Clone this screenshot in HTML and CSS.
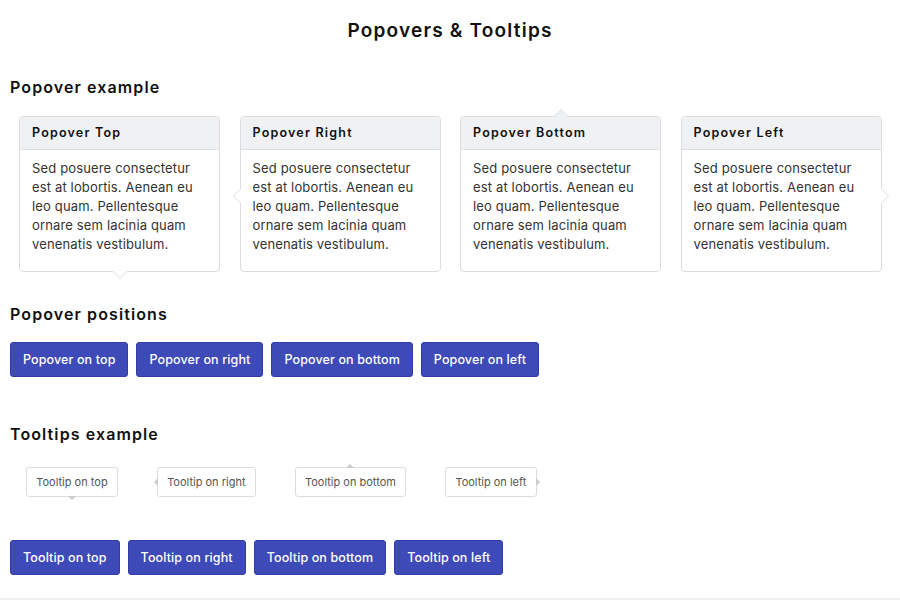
FILE: index.html
```html
<!DOCTYPE html>
<html>
<head>
<meta charset="utf-8">
<link rel="stylesheet" href="styles.css">
</head>
<body>
<div class="page">
  <h1 class="title">Popovers &amp; Tooltips</h1>

  <h2 class="heading h-first">Popover example</h2>
  <div class="cards">
    <div class="card arrow-bottom">
      <div class="card-head">Popover Top</div>
      <div class="card-body">Sed posuere consectetur est at lobortis. Aenean eu leo quam. Pellentesque ornare sem lacinia quam venenatis vestibulum.</div>
    </div>
    <div class="card arrow-left">
      <div class="card-head">Popover Right</div>
      <div class="card-body">Sed posuere consectetur est at lobortis. Aenean eu leo quam. Pellentesque ornare sem lacinia quam venenatis vestibulum.</div>
    </div>
    <div class="card arrow-top">
      <div class="card-head">Popover Bottom</div>
      <div class="card-body">Sed posuere consectetur est at lobortis. Aenean eu leo quam. Pellentesque ornare sem lacinia quam venenatis vestibulum.</div>
    </div>
    <div class="card arrow-right">
      <div class="card-head">Popover Left</div>
      <div class="card-body">Sed posuere consectetur est at lobortis. Aenean eu leo quam. Pellentesque ornare sem lacinia quam venenatis vestibulum.</div>
    </div>
  </div>

  <h2 class="heading h-second">Popover positions</h2>
  <div class="btns">
    <button class="btn">Popover on top</button>
    <button class="btn">Popover on right</button>
    <button class="btn">Popover on bottom</button>
    <button class="btn">Popover on left</button>
  </div>

  <h2 class="heading h-third">Tooltips example</h2>
  <div class="tips">
    <div class="tip tip-top">Tooltip on top</div>
    <div class="tip tip-right">Tooltip on right</div>
    <div class="tip tip-bottom">Tooltip on bottom</div>
    <div class="tip tip-left">Tooltip on left</div>
  </div>

  <div class="btns btns-tips">
    <button class="btn">Tooltip on top</button>
    <button class="btn">Tooltip on right</button>
    <button class="btn">Tooltip on bottom</button>
    <button class="btn">Tooltip on left</button>
  </div>
</div>
<div class="footer-line"></div>
</body>
</html>
```

FILE: styles.css
```css
* { box-sizing: border-box; }
html, body { margin: 0; padding: 0; }
body {
  background: #fff;
  font-family: "Inter", "Noto Sans", "Liberation Sans", sans-serif;
  color: #222;
  width: 900px;
  height: 600px;
  overflow: hidden;
  position: relative;
}
.page {
  padding: 19px 10px 0 10px;
  height: 598px;
}
.title {
  margin: 0;
  text-align: center;
  font-size: 19px;
  line-height: 24px;
  font-weight: 600;
  letter-spacing: 1.2px;
  color: #111;
}
.heading {
  margin: 0;
  font-size: 16px;
  line-height: 22px;
  font-weight: 600;
  letter-spacing: 1.1px;
  color: #111;
}
.h-first { margin-top: 33px; }
.h-second { margin-top: 31px; }
.h-third { margin-top: 46px; }

.cards {
  display: flex;
  gap: 19.5px;
  margin: 18px 0 0 9px;
}
.card {
  position: relative;
  width: 201px;
  height: 156px;
  border: 1px solid #dcdde0;
  border-radius: 4px;
  background: #fff;
}
.card-head {
  height: 33px;
  background: #f0f1f3;
  border-bottom: 1px solid #dfe0e3;
  border-radius: 4px 4px 0 0;
  padding: 0 12px;
  font-size: 12.5px;
  line-height: 32px;
  font-weight: 600;
  letter-spacing: 1.2px;
  color: #111;
}
.card-body {
  padding: 9px 20px 0 12px;
  font-size: 13px;
  line-height: 19px;
  letter-spacing: 0.15px;
  color: #333;
}
.card::before, .card::after {
  content: "";
  position: absolute;
  width: 0;
  height: 0;
  border: 8px solid transparent;
}
.arrow-bottom::before { top: 100%; left: 92px; border-top-color: #dcdde0; }
.arrow-bottom::after { top: calc(100% - 1px); left: 92px; border-top-color: #fff; }
.arrow-left::before { right: 100%; top: 71px; border-right-color: #dcdde0; }
.arrow-left::after { right: calc(100% - 1px); top: 71px; border-right-color: #fff; }
.arrow-top::before { bottom: 100%; left: 92px; border-bottom-color: #dcdde0; }
.arrow-top::after { bottom: calc(100% - 1px); left: 92px; border-bottom-color: #f0f1f3; }
.arrow-right::before { left: 100%; top: 71px; border-left-color: #dcdde0; }
.arrow-right::after { left: calc(100% - 1px); top: 71px; border-left-color: #fff; }

.btns {
  display: flex;
  gap: 8px;
  margin-top: 17px;
}
.btns-tips { margin-top: 43px; }
.btn {
  height: 35px;
  padding: 0 12px;
  background: #3e4ab8;
  border: 1px solid #323ca6;
  border-radius: 3px;
  color: #fff;
  font-family: inherit;
  font-size: 12.5px;
  font-weight: 500;
  letter-spacing: 0.12px;
}

.tips {
  display: flex;
  gap: 39px;
  margin: 22px 0 0 16px;
}
.tip {
  position: relative;
  height: 30px;
  padding: 0 9.25px;
  border: 1px solid #dcdcdc;
  border-radius: 3px;
  background: #fff;
  font-size: 11px;
  line-height: 28px;
  color: #555;
}
.tip::after {
  content: "";
  position: absolute;
  width: 0;
  height: 0;
  border: 4px solid transparent;
}
.tip-top::after { top: 100%; left: 50%; margin-left: -4px; border-top-color: #ccc; }
.tip-right::after { right: 100%; top: 50%; margin-top: -4px; border-right-color: #ccc; }
.tip-bottom::after { bottom: 100%; left: 50%; margin-left: -4px; border-bottom-color: #ccc; }
.tip-left::after { left: 100%; top: 50%; margin-top: -4px; border-left-color: #ccc; }

.footer-line {
  height: 2px;
  background: #f0f0f0;
}
```
